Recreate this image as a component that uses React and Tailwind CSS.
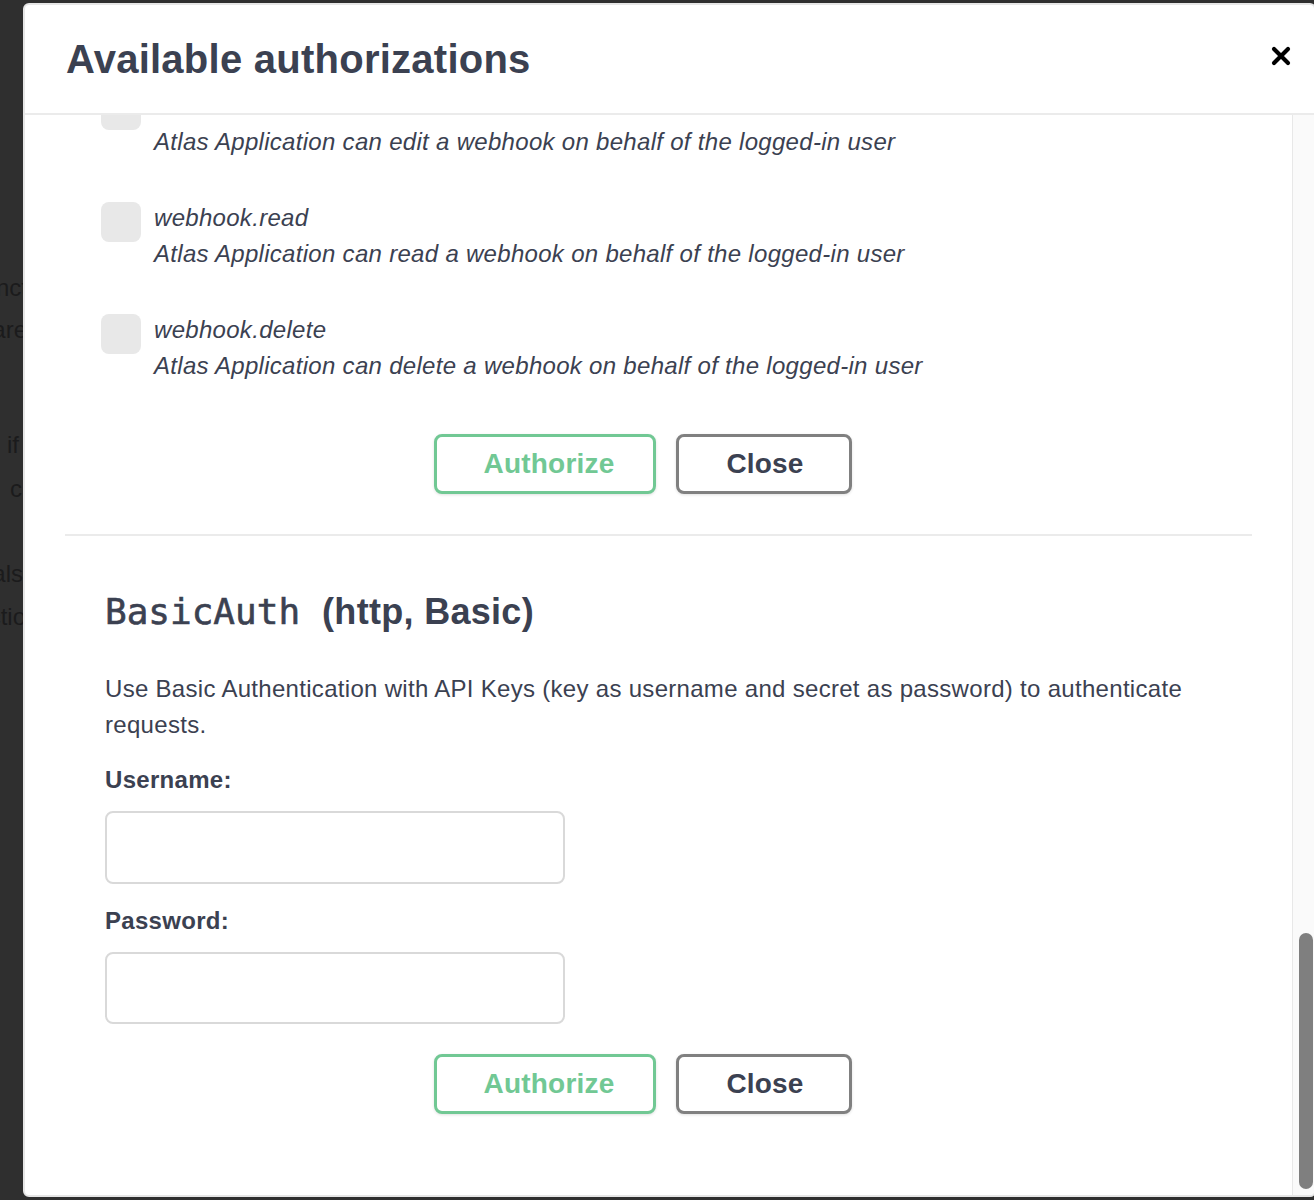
import React from "react";

function Scope({ name, desc }) {
  return (
    <div className="flex gap-[13px]">
      <div className="mt-[2px] h-[40px] w-[40px] shrink-0 rounded-[8px] bg-[#e8e8e8]" />
      <div className="text-[24px] italic leading-[36px] tracking-[0.3px] text-[#3b4151]">
        <div>{name}</div>
        <div>{desc}</div>
      </div>
    </div>
  );
}

function Buttons() {
  return (
    <div className="flex justify-center gap-[20px]">
      <button className="h-[60px] w-[222px] rounded-[8px] border-[3px] border-[#71c894] bg-white pl-[8px] text-[28px] font-bold tracking-[0.2px] text-[#71c894] shadow-[0_1px_3px_rgba(0,0,0,0.12)]">
        Authorize
      </button>
      <button className="mr-[31px] h-[60px] w-[176px] rounded-[8px] border-[3px] border-[#808080] bg-white pl-[2px] text-[28px] font-bold tracking-[0.2px] text-[#3b4151] shadow-[0_1px_3px_rgba(0,0,0,0.12)]">
        Close
      </button>
    </div>
  );
}

export default function App() {
  return (
    <div className="flex h-[1200px] w-[1314px] overflow-hidden bg-[#2f2f2f] font-['Liberation_Sans',Arial,sans-serif]">
      {/* background page fragments */}
      <div className="w-[23px] shrink-0 overflow-hidden pt-[267px] text-[24px] leading-[42px] text-[#1b1b1c]">
        <div className="flex justify-end whitespace-nowrap">
          <span className="mr-[-5px] shrink-0">funct</span>
        </div>
        <div className="flex justify-end whitespace-nowrap">
          <span className="mr-[-4px] shrink-0">are</span>
        </div>
        <div className="mt-[73px] flex justify-end whitespace-nowrap">
          <span className="mr-[4px] shrink-0">if</span>
        </div>
        <div className="mt-[2px] flex justify-end whitespace-nowrap">
          <span className="mr-[1px] shrink-0">c</span>
        </div>
        <div className="mt-[43px] flex justify-end whitespace-nowrap">
          <span className="mr-[0px] shrink-0">vals</span>
        </div>
        <div className="mt-[1px] flex justify-end whitespace-nowrap">
          <span className="mr-[-3px] shrink-0">ctio</span>
        </div>
      </div>

      {/* modal */}
      <div className="mt-[3px] flex h-[1194px] w-[1293px] shrink-0 flex-col overflow-hidden rounded-[6px] border-2 border-[#e6e6e6] bg-white">
        <div className="flex h-[110px] shrink-0 items-center justify-between border-b-2 border-[#ebebeb] pl-[41px] pr-[23px]">
          <h3 className="text-[40px] font-bold leading-none tracking-[0.25px] text-[#3b4151]">
            Available authorizations
          </h3>
          <svg width="20" height="20" viewBox="0 0 20 20" className="mt-[-6px]">
            <path
              d="M3 3 L17 17 M17 3 L3 17"
              stroke="#000"
              strokeWidth="4.2"
              strokeLinecap="round"
              fill="none"
            />
          </svg>
        </div>

        <div className="flex min-h-0 flex-1">
          <div className="min-w-0 flex-1 overflow-hidden">
            <div className="mt-[-27px] px-[40px]">
              <div className="border-b-2 border-[#ebebeb] pb-[40px]">
                <div className="flex flex-col gap-[40px] pl-[36px]">
                  <Scope
                    name="webhook.edit"
                    desc="Atlas Application can edit a webhook on behalf of the logged-in user"
                  />
                  <Scope
                    name="webhook.read"
                    desc="Atlas Application can read a webhook on behalf of the logged-in user"
                  />
                  <Scope
                    name="webhook.delete"
                    desc="Atlas Application can delete a webhook on behalf of the logged-in user"
                  />
                </div>
                <div className="mt-[50px]">
                  <Buttons />
                </div>
              </div>

              <div className="px-[40px] pt-[52px] text-[#3b4151]">
                <h4 className="flex items-baseline leading-[48px]">
                  <span className="font-['DejaVu_Sans_Mono',monospace] text-[36px] font-normal [-webkit-text-stroke:0.6px_#3b4151]">
                    BasicAuth
                  </span>
                  <span className="ml-[22px] text-[36px] font-bold tracking-[0.3px]">
                    (http, Basic)
                  </span>
                </h4>
                <p className="mt-[35px] text-[24px] leading-[36px] tracking-[0.3px]">
                  Use Basic Authentication with API Keys (key as username and secret as
                  password) to authenticate requests.
                </p>
                <div className="mt-[19px] text-[24px] font-bold leading-[36px] tracking-[0.3px]">
                  Username:
                </div>
                <div className="mt-[13px] h-[73px] w-[460px] rounded-[8px] border-2 border-[#d9d9d9] bg-white" />
                <div className="mt-[19px] text-[24px] font-bold leading-[36px] tracking-[0.3px]">
                  Password:
                </div>
                <div className="mt-[13px] h-[72px] w-[460px] rounded-[8px] border-2 border-[#d9d9d9] bg-white" />
                <div className="mt-[30px] pb-[80px]">
                  <Buttons />
                </div>
              </div>
            </div>
          </div>

          <div className="flex w-[22px] shrink-0 flex-col justify-end border-l border-[#e8e8e8] bg-[#fafafa] pb-[6px] pl-[6px]">
            <div className="h-[256px] w-[14px] rounded-full bg-[#7f7f7f]" />
          </div>
        </div>
      </div>
    </div>
  );
}
